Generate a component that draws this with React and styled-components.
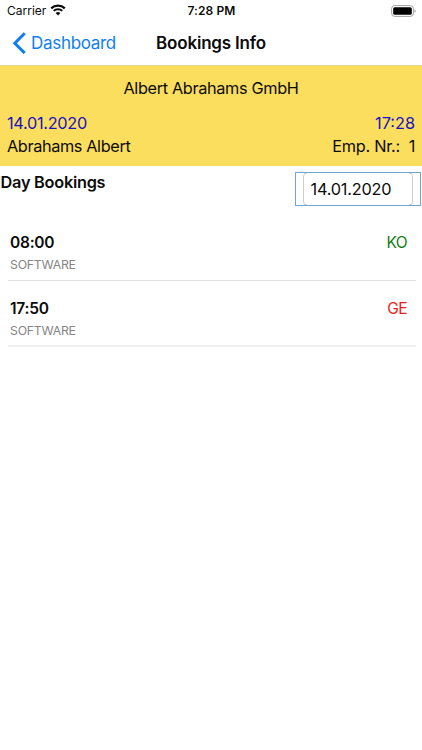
import React from "react";
import styled, { createGlobalStyle } from "styled-components";

const GlobalStyle = createGlobalStyle`
  * { box-sizing: border-box; }
  body { margin: 0; background: #fff; }
`;

const Screen = styled.div`
  display: flex;
  flex-direction: column;
  width: 422px;
  height: 750px;
  overflow: hidden;
  background: #fff;
  color: #0b0b0b;
  font-family: Inter, "Liberation Sans", sans-serif;
`;

const Label = styled.span`
  font-size: ${(p) => p.$size || 16.5}px;
  font-weight: ${(p) => p.$weight || 400};
  letter-spacing: ${(p) => p.$track || 0}px;
  color: ${(p) => p.$color || "inherit"};
  line-height: 22px;
  white-space: pre;
`;

const StatusBar = styled.header`
  display: grid;
  grid-template-columns: 1fr auto 1fr;
  align-items: center;
  height: 22px;
  padding: 0 6px 0 7px;
`;

const Carrier = styled.div`
  display: flex;
  align-items: center;
  gap: 4px;

  svg { margin-bottom: 2px; }
`;

const BatterySlot = styled.div`
  display: flex;
  justify-content: flex-end;
  padding-bottom: 1px;
`;

const NavBar = styled.nav`
  display: grid;
  grid-template-columns: 1fr auto 1fr;
  align-items: center;
  height: 43px;
  padding: 0 12px 1px 12px;
`;

const BackButton = styled.button`
  display: flex;
  align-items: center;
  gap: 5px;
  padding: 0;
  border: 0;
  background: none;
  color: #0f7ef5;
  font-family: inherit;
`;

const Banner = styled.section`
  height: 101px;
  padding: 11px 7px 0;
  border-top: 1px solid #e3d68d;
  background: #fcde5f;
`;

const Company = styled.div`
  display: flex;
  justify-content: center;
  margin-bottom: 13px;
`;

const BannerRow = styled.div`
  display: flex;
  justify-content: space-between;
  height: 23px;
`;

const DayHeader = styled.section`
  display: flex;
  justify-content: space-between;
  align-items: flex-start;
  height: 49px;
  padding: 5px 1px 0 0.6px;
`;

const DateFrame = styled.div`
  display: flex;
  width: 126px;
  height: 34px;
  margin-top: 1px;
  padding: 0 7px;
  border: 1px solid #72a4d4;
`;

const DateField = styled.div`
  display: flex;
  align-items: center;
  flex: 1;
  margin: -1px 0;
  padding: 0 0 1px 6.5px;
  border: 1px solid #cfcfcf;
  border-top-color: #72a4d4;
  border-bottom-color: #72a4d4;
  border-radius: 5px;
`;

const List = styled.ul`
  margin: 0;
  padding: 0 6px 0 8px;
  list-style: none;
`;

const Booking = styled.li`
  display: flex;
  justify-content: space-between;
  height: 66px;
  padding: 17px 9px 0 2px;
  border-bottom: 1px solid #e1e1e1;

  &:last-child {
    border-bottom: 2px solid #eeeeee;
  }
`;

const BookingText = styled.div`
  display: flex;
  flex-direction: column;
`;

const WifiIcon = () => (
  <svg width="16" height="12" viewBox="0 0 16 12" fill="none">
    <path d="M1.2 4.3A9.8 9.8 0 0 1 14.8 4.3" stroke="#0b0b0b" strokeWidth="2.3" />
    <path d="M3.7 6.9A6.2 6.2 0 0 1 12.3 6.9" stroke="#0b0b0b" strokeWidth="2" />
    <path d="M8 11.6 5.6 9.1A3.4 3.4 0 0 1 10.4 9.1Z" fill="#0b0b0b" />
  </svg>
);

const BatteryIcon = () => (
  <svg width="25" height="12" viewBox="0 0 25 12" fill="none">
    <rect x="0.6" y="0.6" width="21.8" height="10.8" rx="3" stroke="#a2a2a2" strokeWidth="1" />
    <rect x="2.2" y="2.2" width="18.6" height="7.6" rx="1.6" fill="#000" />
    <path d="M23.5 4.2Q24.8 4.8 24.8 6T23.5 7.8Z" fill="#a2a2a2" />
  </svg>
);

const BackIcon = () => (
  <svg width="14" height="22" viewBox="0 0 14 22" fill="none">
    <path d="M12.7 1.3 2.8 11.2l9.9 9.9" stroke="#0f7ef5" strokeWidth="3" />
  </svg>
);

const bookings = [
  { time: "08:00", place: "SOFTWARE", code: "KO", color: "#128012" },
  { time: "17:50", place: "SOFTWARE", code: "GE", color: "#ee1c1c" },
];

export default function App() {
  return (
    <Screen>
      <GlobalStyle />
      <StatusBar>
        <Carrier>
          <Label $size={12}>Carrier</Label>
          <WifiIcon />
        </Carrier>
        <Label $size={12} $weight={600} $track={0.1}>7:28 PM</Label>
        <BatterySlot><BatteryIcon /></BatterySlot>
      </StatusBar>
      <NavBar>
        <BackButton>
          <BackIcon />
          <Label $size={17} $track={-0.3}>Dashboard</Label>
        </BackButton>
        <Label $size={17} $weight={600} $track={-0.2}>Bookings Info</Label>
      </NavBar>
      <Banner>
        <Company><Label $size={16.3} $track={-0.35}>Albert Abrahams GmbH</Label></Company>
        <BannerRow>
          <Label $size={16.3} $track={-0.3} $color="#1a10c4">14.01.2020</Label>
          <Label $size={16.3} $color="#1a10c4">17:28</Label>
        </BannerRow>
        <BannerRow>
          <Label $size={16.3} $track={-0.38}>Abrahams Albert</Label>
          <Label $size={16.3} $track={-0.25}>Emp. Nr.:  1</Label>
        </BannerRow>
      </Banner>
      <DayHeader>
        <Label $size={16.3} $weight={600} $track={-0.25}>Day Bookings</Label>
        <DateFrame>
          <DateField><Label $size={16.3} $track={-0.2}>14.01.2020</Label></DateField>
        </DateFrame>
      </DayHeader>
      <List>
        {bookings.map((b) => (
          <Booking key={b.time}>
            <BookingText>
              <Label $size={15.5} $weight={600} $track={-0.25}>{b.time}</Label>
              <Label $size={12.3} $track={-0.25} $color="#858585">{b.place}</Label>
            </BookingText>
            <Label $size={15.5} $track={-0.6} $color={b.color}>{b.code}</Label>
          </Booking>
        ))}
      </List>
    </Screen>
  );
}
